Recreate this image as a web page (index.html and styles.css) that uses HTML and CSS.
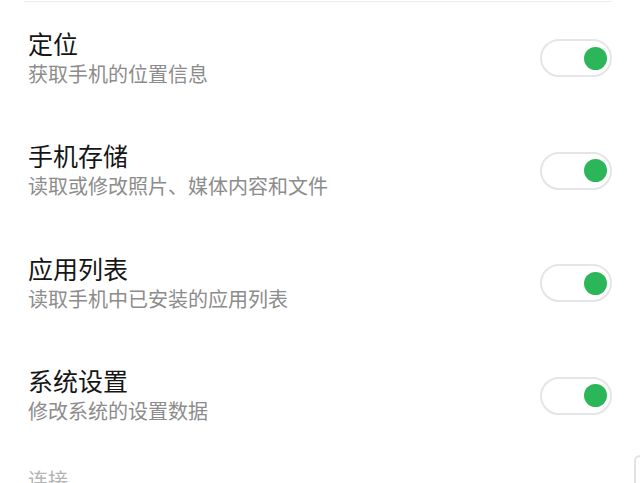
FILE: index.html
```html
<!DOCTYPE html>
<html lang="zh-CN">
<head>
  <meta charset="UTF-8" />
  <meta name="viewport" content="width=device-width, initial-scale=1" />
  <title>权限设置</title>
  <link rel="stylesheet" href="styles.css">
</head>
<body>
  <div class="card-end"></div>

  <div class="perm">
    <div class="perm-text">
      <div class="perm-title">定位</div>
      <div class="perm-desc">获取手机的位置信息</div>
    </div>
    <span class="switch on"><span class="knob"></span></span>
  </div>

  <div class="perm">
    <div class="perm-text">
      <div class="perm-title">手机存储</div>
      <div class="perm-desc">读取或修改照片、媒体内容和文件</div>
    </div>
    <span class="switch on"><span class="knob"></span></span>
  </div>

  <div class="perm">
    <div class="perm-text">
      <div class="perm-title">应用列表</div>
      <div class="perm-desc">读取手机中已安装的应用列表</div>
    </div>
    <span class="switch on"><span class="knob"></span></span>
  </div>

  <div class="perm">
    <div class="perm-text">
      <div class="perm-title">系统设置</div>
      <div class="perm-desc">修改系统的设置数据</div>
    </div>
    <span class="switch on"><span class="knob"></span></span>
  </div>

  <div class="group-title">连接</div>

  <div class="edge"></div>
</body>
</html>
```

FILE: styles.css
```css
:root {
  --verde: #2bb65a;
  --texto: #151515;
  --cinza: #8c8c8c;
  --borda: #e5e5e5;
}

* {
  box-sizing: border-box;
  margin: 0;
  padding: 0;
}

html, body {
  height: 100%;
  overflow: hidden;
}

body {
  font-family: "Noto Sans CJK SC", "Noto Sans", sans-serif;
  background: #fff;
  color: var(--texto);
  position: relative;
  padding: 0 28px;
}

.card-end {
  height: 2px;
  margin-left: -4px;
  border-bottom: 1.5px solid #ededed;
}

.perm {
  display: flex;
  align-items: center;
  justify-content: space-between;
  height: 112.5px;
}

.perm-title {
  font-size: 25px;
  line-height: 28px;
  margin-bottom: 3px;
}

.perm-desc {
  font-size: 20px;
  line-height: 28px;
  color: var(--cinza);
}

.switch {
  width: 72px;
  height: 38px;
  border: 2.5px solid var(--borda);
  border-radius: 19px;
  background: #fff;
  display: flex;
  align-items: center;
  justify-content: flex-end;
  padding-right: 3px;
}

.knob {
  width: 23px;
  height: 23px;
  border-radius: 50%;
  background: var(--verde);
}

.group-title {
  margin-top: 15px;
  font-size: 20px;
  line-height: 26px;
  color: #b5b5b5;
}

.edge {
  position: absolute;
  right: -6px;
  top: 455px;
  width: 12px;
  height: 60px;
  border: 2px solid #e2e2e2;
  border-radius: 8px;
}
```
